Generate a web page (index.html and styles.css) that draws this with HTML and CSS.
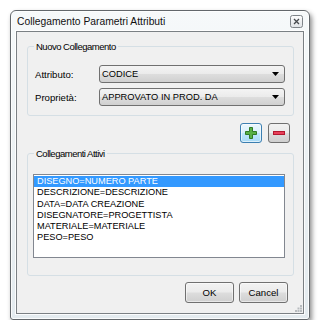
FILE: index.html
```html
<!DOCTYPE HTML>
<html lang="it">
<head>
    <meta charset="UTF-8">
    <meta name="viewport" content="width=device-width, initial-scale=1.0">
    <title>Collegamento Parametri Attributi</title>
    <link rel="stylesheet" href="styles.css">
</head>
<body>

    <div class="window">
        <div class="titlebar">
            <span class="title">Collegamento Parametri Attributi</span>
            <span class="close-btn">
                <svg width="13" height="13" viewBox="0 0 13 13">
                    <defs>
                        <linearGradient id="closeBg" x1="0" y1="0" x2="0" y2="1">
                            <stop offset="0" stop-color="#fdfdfd"/>
                            <stop offset="1" stop-color="#dfe3e6"/>
                        </linearGradient>
                    </defs>
                    <rect x="0.5" y="0.5" width="12" height="12" rx="2" fill="url(#closeBg)" stroke="#7e8489"/>
                    <path d="M4 4 L9 9 M9 4 L4 9" stroke="#45494d" stroke-width="1.3"/>
                </svg>
            </span>
        </div>

        <div class="client">
            <fieldset class="group group-new">
                <legend>Nuovo Collegamento</legend>
                <div class="field-row">
                    <label>Attributo:</label>
                    <div class="combo">
                        <span>CODICE</span>
                        <svg class="arrow" width="7" height="4" viewBox="0 0 7 4"><path d="M0 0 H7 L3.5 4 Z" fill="#000"/></svg>
                    </div>
                </div>
                <div class="field-row">
                    <label>Proprietà:</label>
                    <div class="combo">
                        <span>APPROVATO IN PROD. DA</span>
                        <svg class="arrow" width="7" height="4" viewBox="0 0 7 4"><path d="M0 0 H7 L3.5 4 Z" fill="#000"/></svg>
                    </div>
                </div>
            </fieldset>

            <div class="tool-row">
                <button class="tool-btn tool-add" title="Aggiungi">
                    <svg width="12" height="12" viewBox="0 0 12 12">
                        <path d="M4.5 0.5 H7.5 V4.5 H11.5 V7.5 H7.5 V11.5 H4.5 V7.5 H0.5 V4.5 H4.5 Z" fill="#58b045" stroke="#2f7a25"/>
                    </svg>
                </button>
                <button class="tool-btn tool-remove" title="Rimuovi">
                    <svg width="12" height="4" viewBox="0 0 12 4">
                        <rect x="0.5" y="0.5" width="11" height="3" fill="#e8405a" stroke="#b3182f"/>
                    </svg>
                </button>
            </div>

            <fieldset class="group group-links">
                <legend>Collegamenti Attivi</legend>
                <ul class="listbox">
                    <li class="selected">DISEGNO=NUMERO PARTE</li>
                    <li>DESCRIZIONE=DESCRIZIONE</li>
                    <li>DATA=DATA CREAZIONE</li>
                    <li>DISEGNATORE=PROGETTISTA</li>
                    <li>MATERIALE=MATERIALE</li>
                    <li>PESO=PESO</li>
                </ul>
            </fieldset>

            <div class="footer">
                <button class="btn">OK</button>
                <button class="btn">Cancel</button>
            </div>

            <svg class="grip" width="7" height="7" viewBox="0 0 7 7">
                <rect x="5" y="0" width="2" height="2" fill="#b8bcbf"/>
                <rect x="2.5" y="2.5" width="2" height="2" fill="#b8bcbf"/>
                <rect x="5" y="2.5" width="2" height="2" fill="#b8bcbf"/>
                <rect x="0" y="5" width="2" height="2" fill="#b8bcbf"/>
                <rect x="2.5" y="5" width="2" height="2" fill="#b8bcbf"/>
                <rect x="5" y="5" width="2" height="2" fill="#b8bcbf"/>
            </svg>
        </div>
    </div>

</body>
</html>
```

FILE: styles.css
```css
body {
    margin: 0;
    background-color: #fff;
    font-family: "Liberation Sans", Arial, sans-serif;
    color: #000;
}
.window {
    margin: 10px 0 0 10px;
    width: 300px;
    height: 310px;
    box-sizing: border-box;
    padding: 0 5px 5px 5px;
    border: 1px solid #62676b;
    border-radius: 6px 6px 3px 3px;
    background: linear-gradient(180deg, #f6f9fa 0%, #edf2f4 40%, #e4ebef 100%);
    box-shadow: 2px 3px 5px rgba(0, 0, 0, 0.45), inset 0 0 0 1px rgba(255, 255, 255, 0.8);
    display: flex;
    flex-direction: column;
}
.titlebar {
    height: 20px;
    padding-left: 1px;
    display: flex;
    align-items: center;
    justify-content: space-between;
}
.title {
    font-size: 10.3px;
    color: #111;
}
.close-btn {
    display: flex;
    margin-right: 1px;
}
.client {
    position: relative;
    flex: 1;
    display: flex;
    flex-direction: column;
    padding: 0 9px 0 10px;
    border: 1px solid #7b8084;
    background-color: #f0f0f0;
    box-shadow: 0 0 0 1px rgba(255, 255, 255, 0.85);
}
.group {
    margin: 0;
    min-width: 0;
    border: 1px solid #d5dfe5;
    border-radius: 3px;
}
.group legend {
    padding: 0 2px;
    font-size: 9.5px;
    letter-spacing: -0.5px;
    line-height: 11px;
}
.group-new {
    margin-top: 9px;
    padding: 13px 8px 9px 7px;
    display: flex;
    flex-direction: column;
    gap: 5px;
}
.group-new legend {
    margin-left: -1px;
}
.field-row {
    display: flex;
    align-items: center;
}
.field-row label {
    width: 64px;
    font-size: 9.6px;
}
.combo {
    flex: 1;
    height: 18px;
    box-sizing: border-box;
    padding: 0 5px 0 2px;
    border: 1px solid #707070;
    border-radius: 3px;
    background: linear-gradient(180deg, #f4f4f4 0%, #ebebeb 48%, #dddddd 52%, #d0d0d0 100%);
    display: flex;
    align-items: center;
    justify-content: space-between;
    font-size: 9.3px;
}
.tool-row {
    margin-top: 7px;
    padding-right: 4px;
    display: flex;
    justify-content: flex-end;
    gap: 6px;
}
.tool-btn {
    width: 22px;
    height: 20px;
    padding: 0;
    border: 1px solid #707070;
    border-radius: 3px;
    background: linear-gradient(180deg, #f2f2f2 0%, #ebebeb 48%, #dddddd 52%, #cfcfcf 100%);
    display: flex;
    align-items: center;
    justify-content: center;
}
.tool-add {
    border-color: #3c7fb1;
    background: linear-gradient(180deg, #eaf6fd 0%, #d9f0fc 48%, #bee6fd 52%, #a7d9f5 100%);
    box-shadow: inset 0 0 0 1px rgba(255, 255, 255, 0.6);
}
.group-links {
    margin-top: 5px;
    padding: 15px 8px 17px 5px;
}
.group-links legend {
    margin-left: 1px;
}
.listbox {
    list-style: none;
    margin: 0;
    padding: 1px 0;
    height: 84px;
    box-sizing: border-box;
    border: 1px solid #828790;
    background-color: #fff;
}
.listbox li {
    padding-left: 3px;
    font-size: 9.2px;
    line-height: 11.3px;
    white-space: nowrap;
}
.listbox li.selected {
    background-color: #3399ff;
    color: #fff;
}
.footer {
    margin-top: 6px;
    padding-right: 6px;
    display: flex;
    justify-content: flex-end;
    gap: 5px;
}
.btn {
    width: 49px;
    height: 21px;
    padding: 0;
    border: 1px solid #707070;
    border-radius: 3px;
    background: linear-gradient(180deg, #f2f2f2 0%, #ebebeb 48%, #dddddd 52%, #cfcfcf 100%);
    box-shadow: inset 0 0 0 1px rgba(255, 255, 255, 0.5);
    font-family: "Liberation Sans", Arial, sans-serif;
    font-size: 9.6px;
    color: #000;
}
.grip {
    position: absolute;
    right: 1px;
    bottom: 1px;
}
```
